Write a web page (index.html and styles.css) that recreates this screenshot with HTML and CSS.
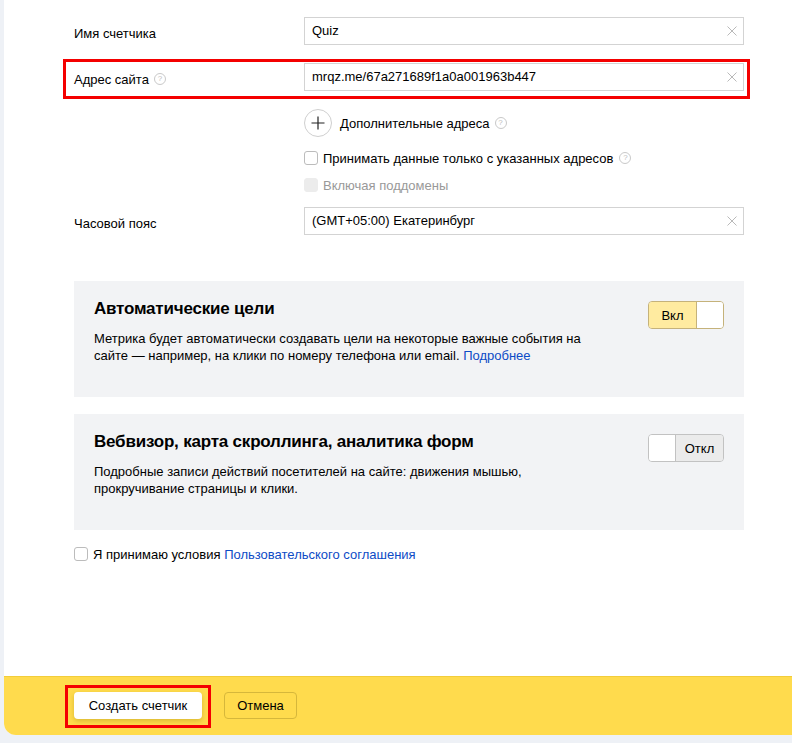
FILE: index.html
```html
<!DOCTYPE html>
<html lang="ru">
<head>
  <meta charset="UTF-8" />
  <meta name="viewport" content="width=device-width, initial-scale=1.0"/>
  <title>Новый счетчик</title>
  <link rel="stylesheet" href="styles.css">
</head>
<body>
  <div class="card">
    <main class="content">
      <div class="form">
        <!-- Name -->
        <div class="row row-name">
          <div class="label">Имя счетчика</div>
          <div class="field">
            <span class="value">Quiz</span>
            <svg class="clear" width="10" height="10" viewBox="0 0 10 10"><path d="M0.5 0.5L9.5 9.5M9.5 0.5L0.5 9.5" stroke="#b9b9b9" stroke-width="1"/></svg>
          </div>
        </div>

        <!-- Site address -->
        <div class="row row-site marked">
          <div class="label">Адрес сайта <span class="hint">?</span></div>
          <div class="field">
            <span class="value">mrqz.me/67a271689f1a0a001963b447</span>
            <svg class="clear" width="10" height="10" viewBox="0 0 10 10"><path d="M0.5 0.5L9.5 9.5M9.5 0.5L0.5 9.5" stroke="#b9b9b9" stroke-width="1"/></svg>
          </div>
        </div>

        <div class="sub add-more">
          <span class="plus">
            <svg width="14" height="14" viewBox="0 0 14 14"><path d="M7 0.5V13.5M0.5 7H13.5" stroke="#222" stroke-width="1.2"/></svg>
          </span>
          <span>Дополнительные адреса</span>
          <span class="hint">?</span>
        </div>

        <label class="sub check check-only">
          <span class="box"></span>
          <span>Принимать данные только с указанных адресов</span>
          <span class="hint">?</span>
        </label>

        <label class="sub check check-sub disabled">
          <span class="box"></span>
          <span>Включая поддомены</span>
        </label>

        <!-- Timezone -->
        <div class="row row-tz">
          <div class="label">Часовой пояс</div>
          <div class="field">
            <span class="value">(GMT+05:00) Екатеринбург</span>
            <svg class="clear" width="10" height="10" viewBox="0 0 10 10"><path d="M0.5 0.5L9.5 9.5M9.5 0.5L0.5 9.5" stroke="#b9b9b9" stroke-width="1"/></svg>
          </div>
        </div>
      </div>

      <section class="option option-goals">
        <div class="option-text">
          <h3>Автоматические цели</h3>
          <p>
            <span class="line">Метрика будет автоматически создавать цели на некоторые важные события на</span>
            <span class="line">сайте — например, на клики по номеру телефона или email. <a href="#">Подробнее</a></span>
          </p>
        </div>
        <div class="toggle on">
          <span class="toggle-label">Вкл</span>
          <span class="knob"></span>
        </div>
      </section>

      <section class="option option-webvisor">
        <div class="option-text">
          <h3>Вебвизор, карта скроллинга, аналитика форм</h3>
          <p>Подробные записи действий посетителей на сайте: движения мышью, прокручивание страницы и клики.</p>
        </div>
        <div class="toggle off">
          <span class="knob"></span>
          <span class="toggle-label">Откл</span>
        </div>
      </section>

      <label class="check terms">
        <span class="box"></span>
        <span>Я принимаю условия <a href="#">Пользовательского соглашения</a></span>
      </label>
    </main>

    <footer class="actions">
      <div class="marked marked-btn">
        <button class="btn btn-primary">Создать счетчик</button>
      </div>
      <button class="btn btn-cancel">Отмена</button>
    </footer>
  </div>
</body>
</html>
```

FILE: styles.css
```css
body {
  margin: 0;
  font-family: "Liberation Sans", Arial, sans-serif;
  font-size: 13px;
  color: #000;
  background: #eef1f6;
  height: 743px;
  overflow: hidden;
}

.card {
  margin-left: 4px;
  height: 735px;
  background: #fff;
  border-bottom-left-radius: 12px;
  overflow: hidden;
  display: flex;
  flex-direction: column;
}

.content {
  flex: 1;
  padding: 17px 0 0 70px;
}

.form {
  width: 670px;
}

.row {
  display: grid;
  grid-template-columns: 230px 440px;
  align-items: center;
  height: 28px;
}

.row .label {
  padding-top: 4px;
  display: flex;
  align-items: center;
  gap: 5px;
}

.row-site {
  margin-top: 18px;
}

.row-tz {
  margin-top: 12px;
}

/* red frame drawn over the marked rows */
.marked {
  position: relative;
}

.marked::after {
  content: "";
  position: absolute;
  top: -4px;
  left: -11px;
  right: -6px;
  bottom: -8px;
  border: 3px solid #f40000;
  pointer-events: none;
}

.field {
  box-sizing: border-box;
  height: 28px;
  border: 1px solid #d3d3d3;
  display: flex;
  align-items: center;
  justify-content: space-between;
  padding: 0 6px 0 7px;
}

.field .value {
  margin-top: -1px;
}

.field .clear {
  flex-shrink: 0;
}

.hint {
  display: inline-flex;
  align-items: center;
  justify-content: center;
  box-sizing: border-box;
  width: 12px;
  height: 12px;
  border: 1px solid #c9c9c9;
  border-radius: 50%;
  font-size: 8px;
  color: #bdbdbd;
  line-height: 1;
}

.sub {
  margin-left: 230px;
  display: flex;
  align-items: center;
}

.add-more {
  margin-top: 18px;
  height: 28px;
  gap: 8px;
}

.add-more .hint {
  margin-left: -3px;
}

.plus {
  box-sizing: border-box;
  width: 28px;
  height: 28px;
  border: 1px solid #cfcfcf;
  border-radius: 50%;
  display: flex;
  align-items: center;
  justify-content: center;
}

.check {
  display: flex;
  align-items: center;
  gap: 5px;
  height: 20px;
}

.check .hint {
  margin-left: 1px;
}

.box {
  box-sizing: border-box;
  width: 14px;
  height: 14px;
  border: 1px solid #bcbcbc;
  border-radius: 3px;
  background: #fff;
  flex-shrink: 0;
}

.check-only {
  margin-top: 11px;
}

.check-sub {
  margin-top: 7px;
}

.disabled {
  color: #999;
}

.disabled .box {
  border-color: #ececec;
  background: #ececec;
}

.option {
  width: 670px;
  box-sizing: border-box;
  height: 116px;
  background: #f2f3f5;
  padding: 20px 20px 0 20px;
  display: flex;
  justify-content: space-between;
  align-items: flex-start;
}

.option-goals {
  margin-top: 46px;
}

.option-webvisor {
  margin-top: 17px;
}

.option-text {
  width: 510px;
}

.option h3 {
  margin: 0;
  font-size: 17px;
  line-height: 14px;
  padding-top: 1px;
  font-weight: bold;
  letter-spacing: -0.2px;
}

.option p {
  margin: 14px 0 0;
  line-height: 17px;
}

.option p .line {
  display: block;
}

a {
  color: #0d4bc6;
  text-decoration: none;
}

.toggle {
  box-sizing: border-box;
  width: 76px;
  height: 28px;
  border: 1px solid;
  border-radius: 4px;
  display: flex;
  overflow: hidden;
  flex-shrink: 0;
}

.toggle .knob {
  width: 26px;
  background: #fff;
}

.toggle-label {
  flex: 1;
  display: flex;
  align-items: center;
  justify-content: center;
}

.toggle.on {
  border-color: #c5b27a;
}

.toggle.on .toggle-label {
  background: #ffeba0;
  border-right: 1px solid #c5b27a;
}

.toggle.off {
  border-color: #c2c2c2;
}

.toggle.off .toggle-label {
  background: #ebebeb;
  border-left: 1px solid #c2c2c2;
}

.terms {
  margin-top: 14px;
}

.actions {
  height: 59px;
  box-sizing: border-box;
  background: #ffdb4d;
  border-top: 1px solid #f2cd3a;
  padding: 15px 0 0 70px;
  display: flex;
  align-items: flex-start;
  gap: 22px;
}

.marked-btn::after {
  top: -7px;
  left: -9px;
  right: -9px;
  bottom: -9px;
}

.btn {
  font-family: inherit;
  font-size: 13px;
  color: #000;
  height: 27px;
  border-radius: 4px;
  cursor: pointer;
  display: block;
}

.btn-primary {
  width: 128px;
  background: #fff;
  border: none;
  box-shadow: 0 2px 5px rgba(150, 120, 0, 0.35);
}

.btn-cancel {
  width: 73px;
  background: transparent;
  border: 1px solid #d6b73b;
}
```
